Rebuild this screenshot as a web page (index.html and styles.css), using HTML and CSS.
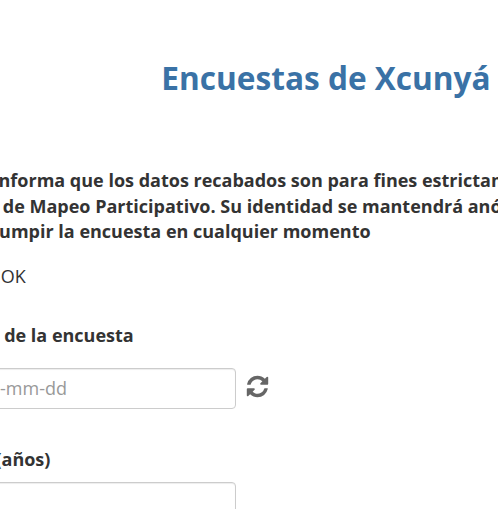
FILE: index.html
```html
<!DOCTYPE html>
<html>
<head>
    <meta charset="utf-8">
    <title>Encuestas de Xcunyá</title>
    <link rel="stylesheet" href="styles.css">
</head>
<body>
    <div class="container">
        <h1 class="titulo">Encuestas de Xcunyá</h1>
        <form id="form">
            <p class="aviso">
                Se le informa que los datos recabados son para fines estrictamente académicos<br>
                Taller de Mapeo Participativo. Su identidad se mantendrá anónima y usted puede<br>
                interrumpir la encuesta en cualquier momento
            </p>
            <label class="check"><input type="checkbox" class="check-box" name="ok"> OK</label>
            <div class="campo">
                <label for="fecha" class="form-label">Fecha de la encuesta</label>
                <div class="fila fila-fecha">
                    <input type="text" class="form-control" name="fecha" id="fecha" placeholder="aaaa-mm-dd">
                    <svg class="refresh" viewBox="0 0 1792 1792" aria-hidden="true"><path d="M1639 1056q0 5-1 7-64 268-268 434.5t-478 166.5q-146 0-282.5-55t-243.5-157l-129 129q-19 19-45 19t-45-19-19-45v-448q0-26 19-45t45-19h448q26 0 45 19t19 45-19 45l-137 137q71 66 161 102t187 36q134 0 250-65t186-179q11-17 53-117 8-23 30-23h192q13 0 22.5 9.5t9.5 22.5zm25-800v448q0 26-19 45t-45 19h-448q-26 0-45-19t-19-45 19-45l138-138q-148-137-349-137-134 0-250 65t-186 179q-11 17-53 117-8 23-30 23h-199q-13 0-22.5-9.5t-9.5-22.5v-7q65-268 270-434.5t480-166.5q146 0 284 55.5t245 156.5l130-129q19-19 45-19t45 19 19 45z"/></svg>
                </div>
            </div>
            <div class="campo">
                <label for="edad" class="form-label">Edad (años)</label>
                <div class="fila">
                    <input type="number" class="form-control" name="edad" id="edad">
                </div>
            </div>
        </form>
    </div>
</body>
</html>
```

FILE: styles.css
```css
html, body {
    height: 100%;
    overflow: hidden;
}

body {
    margin: 0;
    background-color: #fff;
    color: #333;
    font-family: "Open Sans", sans-serif;
    font-size: 18px;
    line-height: 1.428;
}

.container {
    width: 758px;
    margin-left: -53px;
    padding-top: 56px;
}

.titulo {
    margin: 0 0 68px;
    color: #3a72a6;
    font-size: 31.6px;
    line-height: 44px;
    font-weight: 700;
    text-align: center;
}

.aviso {
    margin: 0 0 19px;
    font-weight: 700;
    white-space: nowrap;
}

.check {
    display: block;
    margin-bottom: 33px;
}

.check-box {
    margin: 0 4px 0 32px;
}

.campo {
    margin-bottom: 38px;
}

.form-label {
    display: block;
    margin-bottom: 10px;
    font-weight: 700;
}

.fila {
    display: flex;
    align-items: center;
    gap: 9px;
}

.fila-fecha {
    padding-top: 9px;
}

.form-control {
    box-sizing: border-box;
    width: 289px;
    height: 41px;
    padding: 6px 12px;
    border: 1px solid #ccc;
    border-radius: 4px;
    box-shadow: inset 0 1px 1px rgba(0, 0, 0, 0.075);
    font-family: inherit;
    font-size: 18px;
    color: #555;
}

.form-control::placeholder {
    color: #999;
    opacity: 1;
}

.refresh {
    width: 25px;
    height: 25px;
    margin-top: -4px;
    fill: #666;
}
```
